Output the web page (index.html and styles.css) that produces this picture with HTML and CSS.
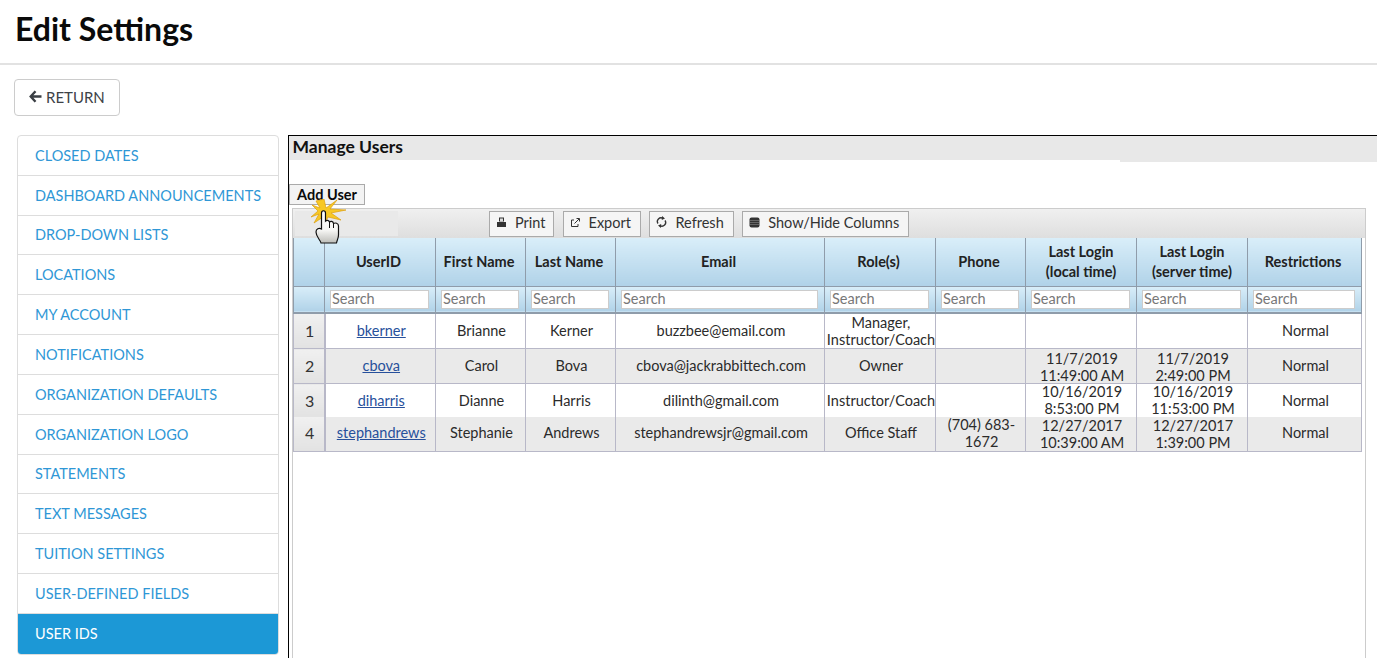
FILE: index.html
```html
<!DOCTYPE html>
<html lang="en">
<head>
    <meta charset="UTF-8">
    <title>Edit Settings</title>
    <link rel="stylesheet" href="styles.css">
</head>
<body>
    <header class="page-header">
        <h1>Edit Settings</h1>
    </header>

    <div class="return-row">
        <a class="return-btn" href="#">
            <svg class="return-arrow" width="13" height="13" viewBox="0 0 13 13"><path d="M6.500 1.200 1.700 6.500l4.800 5.300M2 6.500h10.500" fill="none" stroke="#3a3f44" stroke-width="2.400"/></svg>
            RETURN
        </a>
    </div>

    <div class="content">
        <!-- Settings menu -->
        <nav class="side-menu">
            <a href="#">CLOSED DATES</a>
            <a href="#">DASHBOARD ANNOUNCEMENTS</a>
            <a href="#">DROP-DOWN LISTS</a>
            <a href="#">LOCATIONS</a>
            <a href="#">MY ACCOUNT</a>
            <a href="#">NOTIFICATIONS</a>
            <a href="#">ORGANIZATION DEFAULTS</a>
            <a href="#">ORGANIZATION LOGO</a>
            <a href="#">STATEMENTS</a>
            <a href="#">TEXT MESSAGES</a>
            <a href="#">TUITION SETTINGS</a>
            <a href="#">USER-DEFINED FIELDS</a>
            <a href="#" class="active">USER IDS</a>
        </nav>

        <!-- Manage users frame -->
        <main class="frame">
            <div class="title-bar">
                <h2>Manage Users</h2>
                <div class="title-tail"></div>
            </div>

            <button class="add-user" type="button">Add User</button>

            <!-- Click marker over the button -->
            <svg class="click-hand" width="36" height="46" viewBox="0 0 36 46">
                <defs>
                    <linearGradient id="hand-fill" x1="0" y1="0" x2="0" y2="1">
                        <stop offset="0" stop-color="#fff"/>
                        <stop offset=".6" stop-color="#f6f6f4"/>
                        <stop offset="1" stop-color="#bdbdb8"/>
                    </linearGradient>
                </defs>
                <path d="M13 0l2 9L26 1l-7 9 16 1-15 3 10 7-13-3-3 6-2-6-9 6 5-9-8 3 7-6-6-6 8 3-4-7z" fill="#f7c825" stroke="#dc9f10" stroke-width=".7"/>
                <path d="M10.500 14C10.500 11 14.500 11 14.500 14V22C15.500 21 18 21 18.500 23 19.500 22 22 22 22.500 24.500 24 23.500 27.500 24 27.500 27V36C27.500 39 26 41 25.500 44H10C9.500 41 5 38 5 33 5 30 8 28.500 10.500 30Z" fill="url(#hand-fill)" stroke="#111" stroke-width="1.200"/>
                <path d="M18.500 23V29M22.500 24.500V29" stroke="#111" stroke-width="1" fill="none"/>
            </svg>

            <div class="grid-box">
                <div class="toolbar">
                    <div class="toolbar-blank"></div>
                    <button class="tool-btn print-btn" type="button">
                        <svg width="11" height="11" viewBox="0 0 11 11"><path d="M3 .5h5v4H3zM1 5h9v5H1z" fill="#333"/><path d="M4 1.500h3v3H4z" fill="#ddd"/></svg>
                        Print
                    </button>
                    <button class="tool-btn" type="button">
                        <svg width="11" height="11" viewBox="0 0 11 11"><path d="M4 3H1.500v6.500H8V7M4.500 6.500 9 2M6.500 1.500h3v3" fill="none" stroke="#333" stroke-width="1"/></svg>
                        Export
                    </button>
                    <button class="tool-btn" type="button">
                        <svg width="11" height="12" viewBox="0 0 11 12"><path d="M2 7.500A3.700 3.700 0 0 1 7 2.300M9 4.500A3.700 3.700 0 0 1 4 9.700" fill="none" stroke="#333" stroke-width="1.400"/><path d="M6 0l3 2.500-3.200 1.500zM5 12 2 9.500 5.200 8z" fill="#333"/></svg>
                        Refresh
                    </button>
                    <button class="tool-btn" type="button">
                        <svg width="11" height="11" viewBox="0 0 11 11"><rect x=".5" y=".5" width="10" height="10" rx="2" fill="#333"/><path d="M.5 3.500h10M.5 5.500h10M.5 7.500h10" stroke="#999" stroke-width=".5"/></svg>
                        Show/Hide Columns
                    </button>
                </div>

                <table class="users">
                    <colgroup>
                        <col class="c-num"><col class="c-id"><col class="c-name"><col class="c-name"><col class="c-email">
                        <col class="c-id"><col class="c-name"><col class="c-id"><col class="c-id"><col class="c-last">
                    </colgroup>
                    <thead>
                        <tr class="head-row">
                            <th></th>
                            <th>UserID</th>
                            <th>First Name</th>
                            <th>Last Name</th>
                            <th>Email</th>
                            <th>Role(s)</th>
                            <th>Phone</th>
                            <th class="two-line">Last Login<br>(local time)</th>
                            <th class="two-line">Last Login<br>(server time)</th>
                            <th>Restrictions</th>
                        </tr>
                        <tr class="search-row">
                            <th></th>
                            <th><input type="text" placeholder="Search"></th>
                            <th><input type="text" placeholder="Search"></th>
                            <th><input type="text" placeholder="Search"></th>
                            <th><input type="text" placeholder="Search"></th>
                            <th><input type="text" placeholder="Search"></th>
                            <th><input type="text" placeholder="Search"></th>
                            <th><input type="text" placeholder="Search"></th>
                            <th><input type="text" placeholder="Search"></th>
                            <th><input type="text" placeholder="Search"></th>
                        </tr>
                    </thead>
                    <tbody>
                        <tr>
                            <td class="num"><div>1</div></td>
                            <td><div><a href="#">bkerner</a></div></td>
                            <td><div>Brianne</div></td>
                            <td><div>Kerner</div></td>
                            <td><div>buzzbee@email.com</div></td>
                            <td><div>Manager,<br>Instructor/Coach</div></td>
                            <td><div></div></td>
                            <td><div></div></td>
                            <td><div></div></td>
                            <td><div>Normal</div></td>
                        </tr>
                        <tr class="alt">
                            <td class="num"><div>2</div></td>
                            <td><div><a href="#">cbova</a></div></td>
                            <td><div>Carol</div></td>
                            <td><div>Bova</div></td>
                            <td><div>cbova@jackrabbittech.com</div></td>
                            <td><div>Owner</div></td>
                            <td><div></div></td>
                            <td><div class="stack">11/7/2019<br>11:49:00 AM</div></td>
                            <td><div class="stack">11/7/2019<br>2:49:00 PM</div></td>
                            <td><div>Normal</div></td>
                        </tr>
                        <tr class="short">
                            <td class="num"><div>3</div></td>
                            <td><div><a href="#">diharris</a></div></td>
                            <td><div>Dianne</div></td>
                            <td><div>Harris</div></td>
                            <td><div>dilinth@gmail.com</div></td>
                            <td><div>Instructor/Coach</div></td>
                            <td><div></div></td>
                            <td><div>10/16/2019<br>8:53:00 PM</div></td>
                            <td><div>10/16/2019<br>11:53:00 PM</div></td>
                            <td><div>Normal</div></td>
                        </tr>
                        <tr class="alt last">
                            <td class="num"><div>4</div></td>
                            <td><div><a href="#">stephandrews</a></div></td>
                            <td><div>Stephanie</div></td>
                            <td><div>Andrews</div></td>
                            <td><div>stephandrewsjr@gmail.com</div></td>
                            <td><div>Office Staff</div></td>
                            <td><div class="phone">(704) 683-<br>1672</div></td>
                            <td><div class="stack">12/27/2017<br>10:39:00 AM</div></td>
                            <td><div class="stack">12/27/2017<br>1:39:00 PM</div></td>
                            <td><div>Normal</div></td>
                        </tr>
                    </tbody>
                </table>
            </div>
        </main>
    </div>
</body>
</html>
```

FILE: styles.css
```css
* {
    box-sizing: border-box;
    margin: 0;
    padding: 0;
    font-family: Lato, "Open Sans", sans-serif;
}

html, body {
    height: 100%;
    overflow: hidden;
    background: #fff;
}

a {
    text-decoration: none;
}

.page-header {
    height: 65px;
    padding: 9px 15px 0;
    border-bottom: 2px solid #e2e2e2;
}

.page-header h1 {
    font-size: 32px;
    line-height: 40px;
    font-weight: 700;
    color: #0a0a0a;
}

.return-row {
    padding: 14px 14px 0;
}

.return-btn {
    display: inline-flex;
    align-items: center;
    gap: 4px;
    width: 106px;
    height: 37px;
    padding: 0 0 2px 14px;
    border: 1px solid #ccc;
    border-radius: 4px;
    font-size: 15px;
    color: #3d4247;
}

.content {
    display: flex;
    align-items: flex-start;
    height: 542px;
    padding: 19px 0 0 17px;
}

.side-menu {
    flex: 0 0 262px;
    display: flex;
    flex-direction: column;
    border: 1px solid #ddd;
    border-radius: 4px;
    overflow: hidden;
}

.side-menu a {
    height: 39.83px;
    padding: 0 0 .2px 17px;
    display: flex;
    align-items: center;
    font-size: 14.5px;
    color: #2f97d6;
    border-bottom: 1px solid #ddd;
}

.side-menu a:last-child {
    border-bottom: 0;
}

.side-menu a.active {
    background: #1c98d6;
    color: #fff;
}

.frame {
    position: relative;
    flex: 1;
    height: 523px;
    margin-left: 9px;
    border-top: 1px solid #000;
    border-left: 1px solid #000;
}

.title-bar {
    position: relative;
    height: 24px;
    background: #e8e8e8;
}

.title-bar h2 {
    padding-left: 3.5px;
    font-size: 17.5px;
    line-height: 22px;
    font-weight: 700;
    color: #111;
}

.title-tail {
    position: absolute;
    right: 0;
    top: 24px;
    width: 257px;
    height: 2px;
    background: #e8e8e8;
}

.add-user {
    display: block;
    width: 76px;
    height: 21px;
    margin-top: 24px;
    background: #f3f3f3;
    border: 1px solid #aaa;
    font-size: 14.5px;
    font-weight: 700;
    line-height: 18px;
    color: #0a0a0a;
}

.click-hand {
    position: absolute;
    left: 22px;
    top: 63px;
}

.grid-box {
    width: 1074px;
    height: 450px;
    margin: 3px 0 0 3px;
    border-top: 1px solid #ccc;
    border-right: 1px solid #ccc;
    border-left: 1px solid #ccc;
}

.toolbar {
    display: flex;
    align-items: center;
    gap: 8.5px;
    height: 29px;
    padding-left: 2px;
    background: linear-gradient(#f0f0f0, #dedede);
}

.toolbar-blank {
    width: 103px;
    height: 25px;
    margin-right: 82.5px;
    background: #e9e9e9;
}

.tool-btn {
    display: flex;
    align-items: center;
    gap: 8px;
    height: 26px;
    padding: 0 9px 3px 6px;
    background: #f5f5f5;
    border: 1px solid #aaa;
    font-size: 14.5px;
    color: #333;
}

.print-btn {
    padding-right: 7px;
    margin-right: .5px;
}

.users {
    width: 1068px;
    table-layout: fixed;
    border-collapse: collapse;
    font-size: 14.5px;
    color: #2b2b2b;
}

.c-num { width: 31px; }
.c-id { width: 111px; }
.c-name { width: 90px; }
.c-email { width: 209px; }
.c-last { width: 114px; }

.head-row th {
    height: 48px;
    padding: 1px 3px 0 0;
    background: linear-gradient(#d9eef9, #b0d2e8);
    border: 1px solid #8f9caa;
    border-top: 0;
    font-size: 14.5px;
    font-weight: 700;
    line-height: 20px;
    color: #222;
}

.head-row th.two-line {
    padding: 0;
}

.search-row th {
    height: 27px;
    background: linear-gradient(#d9eef9, #b0d2e8);
    border: 1px solid #8f9caa;
    border-bottom: 2px solid #8f9caa;
    padding: 0 6px 0 5px;
}

.search-row input {
    display: block;
    width: 100%;
    height: 19px;
    padding: 0 1px 1px;
    background: #fff;
    border: 1px solid #ccc;
    font-size: 14.5px;
}

.search-row input::placeholder {
    color: #777;
}

.users td {
    height: 35px;
    padding: 0;
    border: 1px solid #b8b8c8;
    text-align: center;
    line-height: 17px;
}

.users td > div {
    display: flex;
    align-items: center;
    justify-content: center;
    height: 34px;
    padding: 0 0 1px 2px;
}

.users td > div.stack {
    padding: 1px 0 0 2px;
}

.users td.num {
    background: linear-gradient(#f0f0f0, #e2e2e2);
    border-right-width: 2px;
    font-size: 16px;
    color: #333;
}

.users td a {
    color: #27509b;
    text-decoration: underline;
}

.users tr.alt td {
    background: #eaeaea;
}

.users tr.alt td.num {
    background: linear-gradient(#f0f0f0, #e2e2e2);
}

.users tr.short td {
    height: 33px;
    border-bottom: 0;
}

.users tr.short td > div {
    height: 32px;
    padding-bottom: 0;
}

.users tr.last td {
    border-top: 0;
}

.users tr.last td > div {
    padding-bottom: 2px;
}

.users tr.last td > div.stack {
    padding: 1px 0 0 2px;
}

.users tr.last td > div.phone {
    padding-bottom: 1px;
}
```
